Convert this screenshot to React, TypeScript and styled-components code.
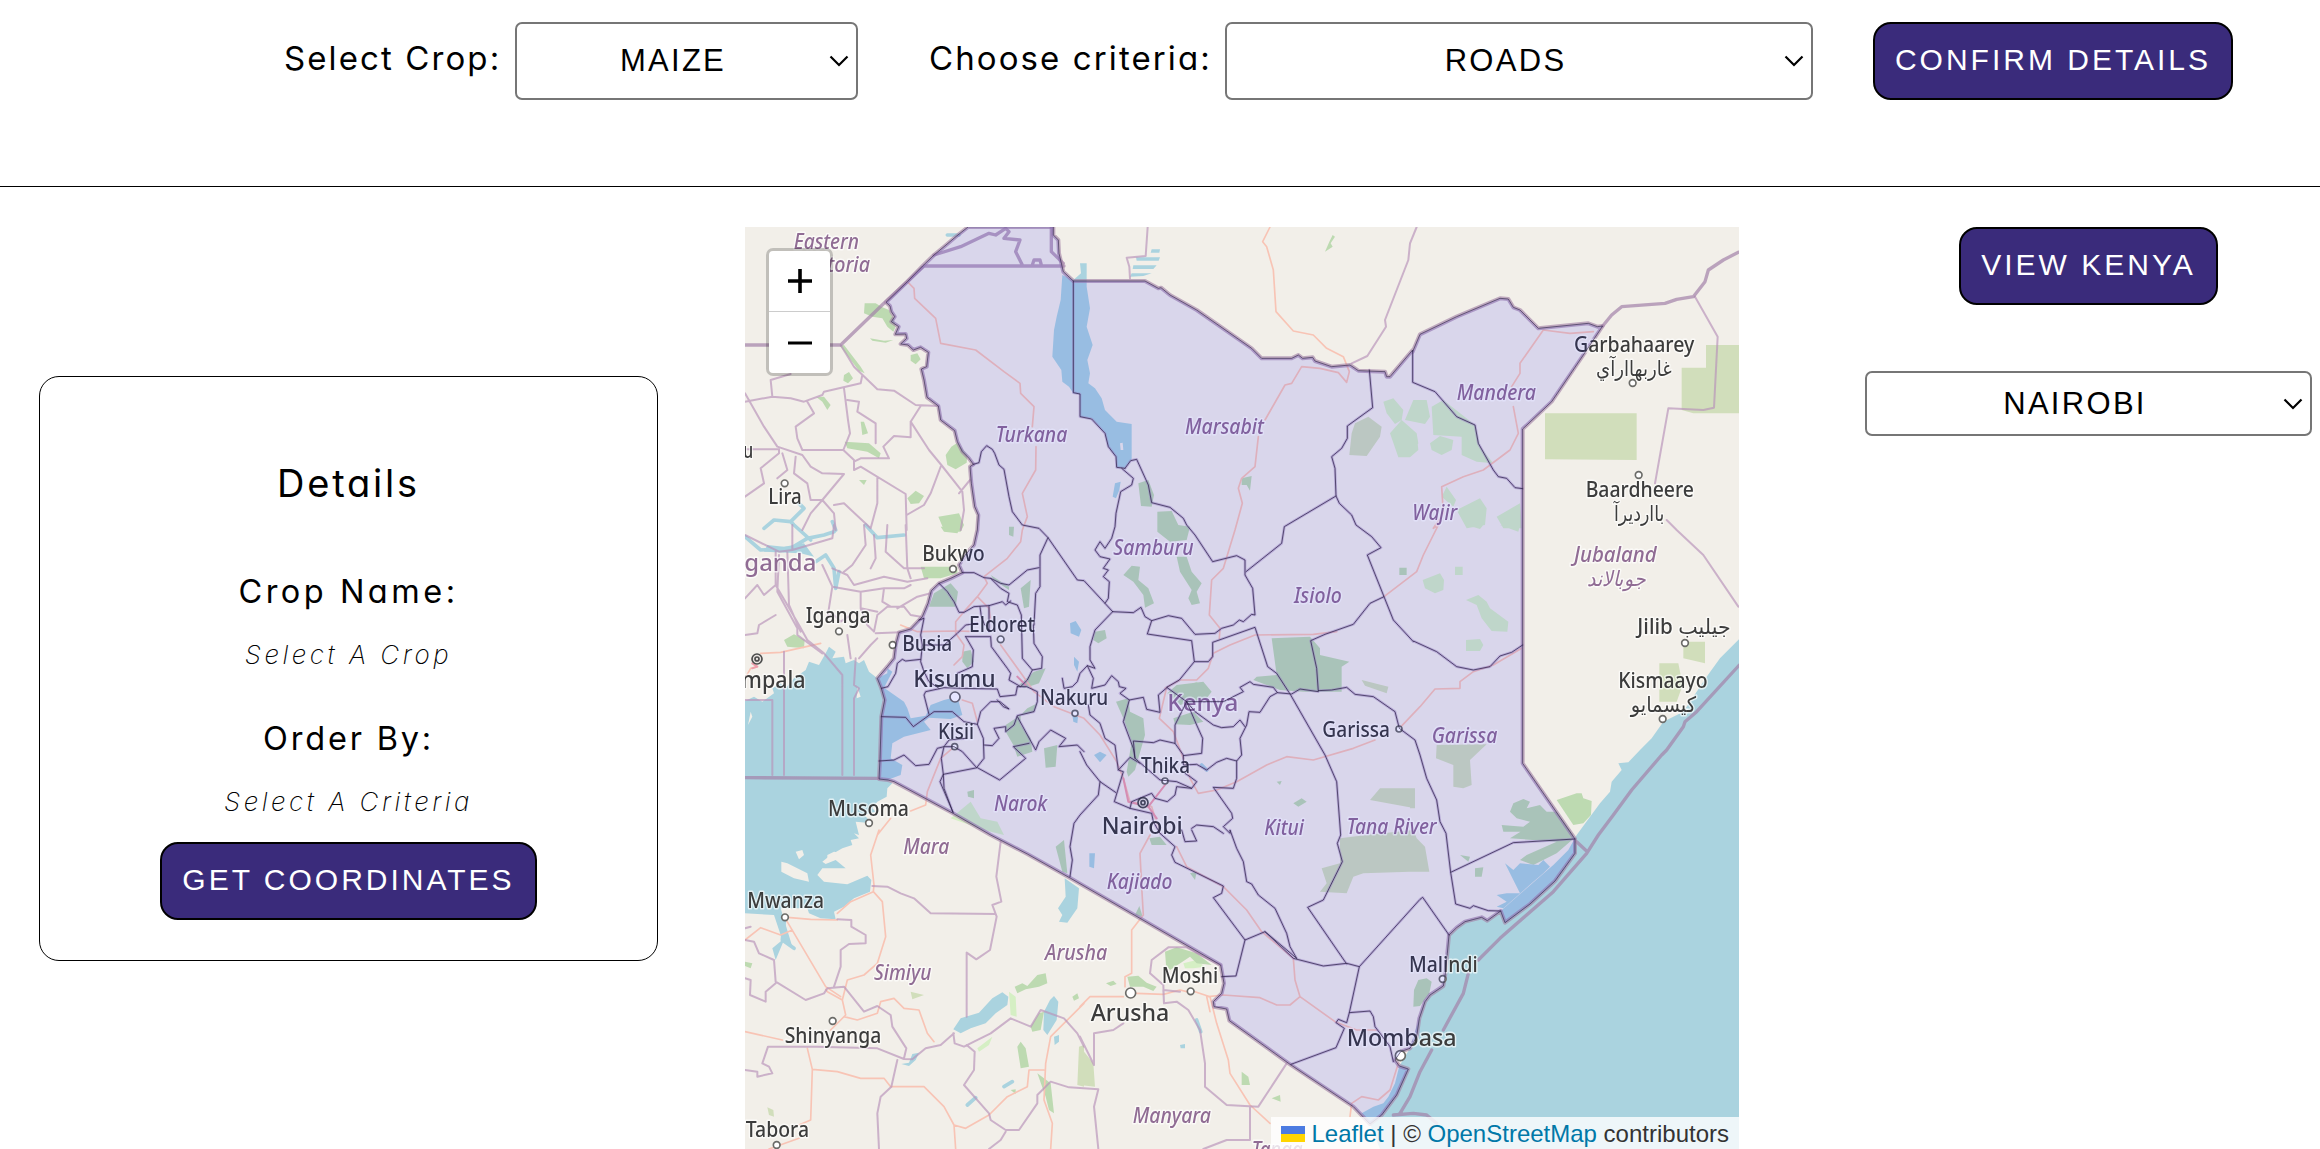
import React from "react";
import styled, { createGlobalStyle } from "styled-components";

const GlobalStyle = createGlobalStyle`
  *, *::before, *::after { box-sizing: border-box; }
  html, body { margin: 0; height: 100%; overflow: hidden; background: #fff; }
  body { color: #000; font-family: Inter, "Open Sans", sans-serif; font-feature-settings: "cv11" 1; }
`;

const Page = styled.div`
  display: flex;
  flex-direction: column;
  height: 1149px;
  overflow: hidden;
`;

const Toolbar = styled.header`
  display: flex;
  align-items: flex-start;
  height: 187px;
  padding: 22px 87px 0 284px;
  border-bottom: 1px solid #000;
`;

const Field = styled.label<{ $width: number; $after: number }>`
  display: flex;
  justify-content: space-between;
  width: ${(p) => p.$width}px;
  margin-right: ${(p) => p.$after}px;
`;

const FieldLabel = styled.span`
  font-size: 33px;
  line-height: 72px;
  letter-spacing: 2.1px;
  white-space: nowrap;
`;

const SelectBox = styled.span<{ $width: number; $height: number }>`
  display: grid;
  grid-template-columns: 1fr 27px;
  align-items: center;
  width: ${(p) => p.$width}px;
  height: ${(p) => p.$height}px;
  border: 2px solid #767676;
  border-radius: 7px;
  background: #fff;
  color: #000;
`;

const SelectValue = styled.span`
  text-align: center;
  font: 31px/36px "Liberation Sans", Arial, sans-serif;
  letter-spacing: 2.3px;
`;

const Button = styled.button<{ $width: number }>`
  flex: none;
  width: ${(p) => p.$width}px;
  height: 78px;
  padding: 0 0 2px;
  border: 2px solid #000;
  border-radius: 18px;
  background: #3a2b7b;
  color: #fff;
  font: 30px/36px "Liberation Sans", Arial, sans-serif;
  letter-spacing: 3px;
  white-space: nowrap;
`;

const Main = styled.main`
  display: grid;
  grid-template-columns: 745px 994px 581px;
  height: 962px;
  padding-top: 40px;
`;

const Card = styled.section`
  display: flex;
  flex-direction: column;
  align-items: center;
  width: 619px;
  height: 585px;
  margin: 149px 0 0 39px;
  padding-top: 81px;
  border: 1px solid #000;
  border-radius: 20px;
`;

const CardTitle = styled.h2`
  margin: 0 0 62px;
  font-size: 38px;
  line-height: 50px;
  font-weight: 400;
  letter-spacing: 2.8px;
`;

const Term = styled.h3<{ $spacing: number }>`
  margin: 0 0 23px;
  font-size: 32.5px;
  line-height: 44px;
  font-weight: 400;
  letter-spacing: ${(p) => p.$spacing}px;
`;

const Value = styled.p<{ $after: number }>`
  margin: 0 0 ${(p) => p.$after}px;
  font-size: 26px;
  line-height: 36px;
  font-weight: 250;
  font-style: italic;
  letter-spacing: 3.5px;
`;

const Side = styled.aside`
  display: flex;
  flex-direction: column;
  align-items: center;
  gap: 66px;
  padding: 0 8px 0 126px;
`;

const MapFrame = styled.div`
  position: relative;
  width: 994px;
  height: 922px;
  overflow: hidden;
  background: #f2efe9;
`;

const MapDrawing = styled.svg`
  display: block;
  width: 994px;
  height: 922px;
  font-family: "Noto Sans", "DejaVu Sans", sans-serif;
`;

const TileLayer = styled.g`
  filter: blur(1.5px);
`;

const ZoomControl = styled.div`
  position: absolute;
  left: 21px;
  top: 21px;
  display: flex;
  flex-direction: column;
  width: 67px;
  border: 3.5px solid rgba(0, 0, 0, 0.2);
  border-radius: 7px;
  background: #fff;
  background-clip: padding-box;
`;

const ZoomButton = styled.button`
  display: grid;
  place-items: center;
  height: 61px;
  padding: 0;
  border: 0;
  background: none;
  &:first-child { border-bottom: 1.5px solid #ccc; }
`;

const Attribution = styled.div`
  position: absolute;
  right: 0;
  bottom: 0;
  display: flex;
  align-items: center;
  height: 32px;
  padding: 2px 10px 0;
  background: rgba(255, 255, 255, 0.8);
  color: #333;
  font: 24px/30px "Liberation Sans", Arial, sans-serif;
  white-space: pre;
  a { color: #0078a8; }
  svg { margin-right: 7px; }
`;

/* Survey sheets: the map is digitised on nine sheets at three units per pixel. */
const SHEETS: Record<string, [number, number]> = {
  NW: [0, 0], N: [1008, 0], NE: [1998, 0],
  W: [0, 915], C: [1008, 915], E: [1998, 915],
  SW: [0, 1830], S: [1008, 1830], SE: [1998, 1830],
};

/* Turns "NW 10 20 30 40 | W 5 6 7 8" into path data in map units. */
function trace(source: string, close = false): string {
  let [dx, dy] = SHEETS.NW;
  let out = "";
  let start = true;
  let x: number | null = null;
  for (const token of source.trim().split(/\s+/)) {
    if (SHEETS[token]) {
      [dx, dy] = SHEETS[token];
    } else if (token === "|") {
      if (close) out += "Z";
      start = true;
    } else if (x === null) {
      x = Number(token) + dx;
    } else {
      out += `${start ? "M" : "L"}${x} ${Number(token) + dy}`;
      start = false;
      x = null;
    }
  }
  return close ? out + "Z" : out;
}

const KENYA = `NW 672 21 638 48 600 80 570 105 536 138 490 185 426 247 438 258 442 275 452 290 442 305 464 320 454 343
 485 342 488 355 470 372 492 375 508 390 530 382 553 397 548 440 532 447 540 480 549 532 583 558 590 600 632 632
 640 665 655 695 675 715 688 733 678 740 682 790 692 860 703 885 700 930
 W 690 60 665 88 645 120 655 143 620 160 585 175 562 197 552 235 535 275 500 312 465 322 455 360 450 400 430 425 400 460
 412 490 422 525 412 575 408 700 405 762 432 765 450 770 627 865 740 930
 SW 850 72 980 145 1020 168 S 180 265 422 405 432 460 425 490 400 515 402 530 440 537 448 572 630 703 820 830 870 882
 905 855 950 795 985 717 958 708 945 690 962 665 990 655 1010 620
 SE 28 565 45 515 60 495 100 468 105 440 112 370 117 315 140 293 165 275 215 262 232 272 272 243 285 278 360 222 435 153
 495 70 495 27 E 338 715 338 0 NE 338 627 425 545 520 405 578 318 562 320 535 310 385 325 330 270 310 262 295 237 270 235
 140 290 30 343 8 395 N 998 390 930 470 920 470 915 455 835 452 810 435 755 440 705 423 698 412 668 415 655 405 635 415
 545 415 515 385 350 270 270 225 243 203 235 205 195 183 0 183 NW 988 183 958 155 945 100 943 60 928 45 928 21`;

const COUNTIES = `NW 688 733 705 728 712 695 728 677 745 688 752 700 765 735 780 748 795 830 805 875 835 915
 W 885 10 912 38 1000 165 C 12 167 75 235 98 260
 | W 912 38 888 90 888 125 888 185 875 205 870 300
 | W 655 143 690 143 720 158 740 160 770 175 795 180 850 135 885 128
 | W 740 160 770 190 795 205 790 230 820 240 832 270 835 400 865 435 893 430 895 395 870 355 868 300
 | W 585 175 610 200 630 230 645 262 660 262 690 245 735 242 775 230 785 240 800 228
 | W 735 242 735 320 | W 708 245 712 275 722 300
 | W 525 285 540 280 530 330 535 360 530 410 540 440 555 470 585 490
 | W 412 490 432 485 455 445 460 415 475 403 485 408 530 403
 | W 540 360 600 360 640 325 665 300 700 295
 | W 665 335 740 335 742 365 790 430 800 445 795 465 830 485 850 465 865 435
 | W 665 335 688 375 685 425 640 445
 | W 555 568 540 510 545 500 600 488 650 490 760 492 768 515 815 510 820 485
 | W 412 575 485 577 508 605 570 560 625 560 660 590 700 598 710 560 740 530 768 530 795 552 778 545 760 525
 | W 405 708 450 705 480 690 515 722 555 718 580 670 600 665 615 645 665 640
 | W 700 598 718 640 720 700 698 728 655 680 630 665 600 665 592 700 598 748 700 728 767 765 845 700 808 665 855 655
 | W 598 748 588 770 627 862 | W 598 748 600 790 627 862
 | W 720 660 745 662 765 640 750 610 785 605 785 620 810 600 820 572 870 560 880 530 880 500 848 485 820 485
 | W 820 575 875 675 885 650 920 615 965 640 945 665 1000 660 1020 680
 | W 955 460 960 490 985 485 1000 470 C 0 445 22 422 40 460 35 490 75 480 95 452 115 470 118 485 138 490 120 505 148 525 190 517 200 553 240 562 235 510 262 487
 | C 22 422 45 430 30 405 30 365 45 315 98 260
 | C 98 260 160 263 183 247 195 275 215 287 265 272 305 280 345 328 405 325 425 310 460 300 478 285 490 290 515 268 525 270 518 190 495 150 495 105 470 92 398 110
 345 30 320 0 N 310 895 270 862 215 848 205 795 170 718 152 722 135 745
 | C 215 287 202 327 335 347 343 410 385 410 398 395 398 352 525 307 563 425 590 445 632 510 735 690 770 770 782 930
 S 772 40 787 95 730 210 683 232 800 402
 | C 343 410 298 465 260 487 320 530 430 530 490 500 480 487 510 470 520 478 580 487 592 503 635 507 660 492 715 500 710 430 692 347 735 328 820 298 870 235 912 215
 862 90 903 68 875 35 828 0 N 815 885 778 850 768 828 765 745 755 710 785 685 802 655 802 618 878 563 868 450
 | N 768 828 613 920 C 605 55 498 140
 | C 912 215 940 285 1000 350 E 10 348 80 380 140 425 190 435 240 425 270 393 305 382 338 360
 | C 715 497 755 495 800 487 825 508 880 515 945 560 958 610 1005 645 1020 690 E 50 760 80 825 90 890
 SE 108 10 122 127 137 222 180 235 190 227 235 242 272 243
 | SE 122 127 310 38 495 27
 | NE 8 395 8 487 75 515 140 590 195 615 205 670 250 750 265 770 290 775 315 803 338 806
 | C 592 503 570 515 540 562 507 560 500 600 480 640 485 690 470 708 440 700 410 712 380 735 350 718 310 720 310 690 285 655 240 645 220 653 160 648 165 700
 | C 320 530 305 560 285 600 285 655 | C 320 530 350 600 368 640 365 685 310 692
 | C 320 530 345 560 400 600 425 608 460 605 480 585 495 605
 | C 470 708 470 760 460 790 400 787 455 865 458 880 430 905 450 925 S 450 0 470 55 490 95 500 155 515 162 535 195 585 235 620 310 630 350 650 385
 | C 25 540 30 570 60 595 75 640 105 660 115 735 130 740 103 830 150 850 155 830 215 805 225 820 262 830 285 810 290 785 335 790 350 770 330 755 315 745
 | C 150 850 215 865 220 890 240 925
 | C 148 525 130 590 160 670 165 700 240 765 290 770 335 790 | C 115 735 150 697 180 715
 | C 0 680 20 720 60 770 108 803 | C 60 770 55 810 0 870 SW 990 -20 978 50 985 90 978 140
 | S 240 10 285 50 275 75 285 97 430 168 425 190 400 203 495 330 555 305 640 385 730 408 800 400 838 410 S 1020 208 SE 38 202 117 315
 | S 555 305 650 385 | S 838 410 808 548 800 578 775 568 768 578 793 595 768 653 633 703
 | S 808 548 870 543 880 560 885 590 930 650 940 695 | S 495 330 468 438 425 440
 | S 305 0 315 35 350 33 335 0 | C 335 910 350 900 400 905 430 925
 | NW 988 183 988 518 1008 522 1008 590 N 35 597 75 640 85 680 108 710 110 742 135 745
 | N 125 745 160 775 155 795 122 815 108 880 105 920 C 95 40 75 70 60 50 45 75 60 95 90 102 70 130 85 135 70 155 88 170 85 220 75 235`;

const LAND_PARKS = `NW 362 250 395 250 415 262 435 270 448 295 455 320 448 335 430 320 415 295 385 290 360 280
 | NW 288 378 300 375 350 440 362 460 345 452 | NW 500 405 520 400 530 418 515 433 500 422 | NW 300 465 315 456 327 475 312 490 298 482
 | NW 605 705 622 680 640 668 670 705 668 728 635 748 610 735 | NW 490 835 515 812 540 828 525 850 500 852
 | NW 583 890 645 880 660 915 W 650 20 600 15 | NW 302 665 375 670 410 700 405 715 370 695 310 685
 | NW 218 532 240 530 260 555 250 570 235 545 | NW 350 605 360 605 372 640 355 645 | NW 345 780 368 780 360 795
 | NW 378 355 385 362 425 368 448 360 420 362 | N 758 45 765 50 752 70 758 80 735 95 748 65
 | W 530 125 640 125 640 145 590 160 540 160 | W 555 245 570 205 620 175 642 200 635 245
 | W 120 345 150 328 182 345 180 370 130 365 | W 655 380 680 375 690 410 670 430 655 410
 | W 870 440 905 430 885 475 840 490 825 480 | W 785 600 830 570 830 600 860 640 865 680 820 695 808 660 785 620
 | W 900 670 940 660 935 725 905 728 | W 740 150 795 185 795 195 750 165 | W 830 190 860 165 855 245 840 250
 | W 850 550 880 535 870 560 830 570 | W 670 800 690 795 690 820 672 815 | W 795 5 810 5 808 35 795 30
 | N 175 790 205 780 222 825 215 860 183 858 | N 232 875 275 873 295 915 330 920 C 320 45 270 50 232 20
 | C 290 95 320 95 335 140 365 175 350 200 360 235 335 240 325 220 335 195 300 140 | C 130 150 155 122 180 125 175 165 205 190 222 235 195 248 190 210 160 170
 | N 485 775 515 768 510 812 500 795 485 795 | C 45 320 75 315 80 340 55 355 40 345
 | C 575 340 690 335 720 370 720 390 808 410 785 425 785 500 670 500 600 495 520 465 530 455 590 450
 | C 108 530 145 520 150 560 190 580 195 630 165 735 145 755 140 740 155 650 130 580
 | C 262 505 290 480 370 470 395 500 380 520 300 540 | C 280 580 340 560 370 590 330 600 285 598
 | C 640 835 665 820 680 830 655 845 | C 590 770 605 768 600 780 | C 958 128 980 128 980 150 958 150
 | S 208 25 240 20 260 45 215 45 | S 255 365 290 352 350 370 395 405 350 400 330 380 270 420 258 405
 | S 142 440 175 437 200 458 230 470 220 483 190 470 150 470 | S 78 460 100 452 110 462 92 468
 | S 485 725 505 740 510 765 485 765 | S 575 805 600 795 602 815 | S 165 255 178 228 188 260 | S 330 130 350 125 345 150
 | SE 10 530 12 480 25 450 50 445 65 455 58 490 30 528 | E 440 825 500 805 515 805 520 820 545 828 543 870 520 895 490 900
 | E 310 835 340 822 360 830 350 850 390 840 410 860 440 860 490 930 440 930 400 920 280 920 275 900 340 905 360 890 320 880 300 860
 | SE 300 25 340 0 480 0 492 25 440 70 370 105 330 90 350 75 440 35 | SE 150 75 180 80 175 95 | SE 195 115 220 112 215 140 195 140
 | SW 3 395 25 400 20 415 3 408 | SW 812 470 835 460 850 468 880 435 905 430 910 460 885 470 845 478 820 490
 | SW 860 590 885 550 900 545 890 600 865 605 | SW 820 650 830 635 845 655 855 710 830 715 | SW 985 500 1000 490 1005 505 990 512
 | SW 880 730 920 760 930 850 915 840 905 800 | SW 935 50 960 30 970 130 955 125 | SW 800 780 815 778 815 792
 | W 590 5 655 0 640 25 600 20`;

const RESERVES = `NE 405 580 680 580 680 720 405 718 | NE 815 443 888 443 888 375 987 375 987 580 850 580 815 570
 | E 820 350 885 350 885 415 820 400 | E 748 415 805 415 818 480 800 530 748 530
 | N 825 610 865 590 905 620 900 650 860 708 808 705 815 640 | C 900 790 1005 790 1005 850 870 825
 | S 780 25 860 15 1000 0 SE 20 25 45 50 58 125 0 125 S 850 130 820 140 800 190 720 185 740 160 725 115 780 100
 | E 80 660 230 658 180 705 185 780 160 790 130 785 130 720 78 700 | E 0 795 15 800 15 850 0 850
 | C 845 465 925 485 920 505 855 482 | SW 500 485 540 495 505 508 | SW 1005 650 1020 645 1020 770 1000 765
 | S 0 650 40 700 45 770 0 765 | SW 70 832 88 840 90 860 75 855`;

const PALE_PARKS = `N 910 545 940 535 970 570 965 600 945 612 920 580 | N 975 600 1000 540 NE 50 540 60 590 45 612
 | N 965 600 1010 640 1015 690 990 712 955 712 930 640 | NE -5 620 20 640 25 670 0 710
 | NE 65 560 100 540 195 615 210 680 250 730 200 725 155 705 155 650 70 645 | NE 60 670 90 648 130 660 125 690 95 705 65 690
 | NE 140 870 210 835 230 865 225 915 170 925 | NE 260 890 330 850 336 925 280 925 | NE 110 800 138 840 130 860 95 830
 | E 38 165 90 145 102 165 100 195 75 205 45 190 | E 135 125 158 125 158 150 135 150
 | E 168 225 205 210 230 230 240 250 295 290 292 320 245 318 215 280 200 240 | E 168 345 210 342 220 360 210 378 168 378
 | E 170 0 220 0 210 12 | E 270 0 330 0 325 20 | C 310 490 350 470 372 495 355 515 320 510
 | W 620 880 680 830 710 880 760 890 780 930 720 915 | SW 795 485 815 500 818 560 800 555 | SW 700 655 745 620 735 645 705 665
 | S 310 400 350 390 375 410 340 415 315 415`;

const LAKES = `NW 955 165 950 240 938 290 930 330 925 410 952 450 955 485 975 500 988 520 1008 522 1008 590 N 35 595 75 640 85 680
 108 710 110 742 135 745 155 718 155 612 110 605 75 570 65 535 45 505 25 490 30 460 22 420 38 375 20 320 30 265 20 200
 20 130 0 130 3 160 NW 988 180
 | W 3 528 30 515 55 530 90 505 85 490 110 475 125 490 150 460 185 435 195 410 225 420 245 385 255 365 275 380 265 400 300 395 305 415 330 405 345 415
 360 405 375 440 400 460 430 445 430 430 445 440 420 488 480 530 490 550 500 580 545 572 560 540 600 525 640 515 655 570 620 582 555 578 540 590 560 615 480 635
 445 655 440 700 475 720 470 750 430 765 445 775 430 790 428 815 400 830 385 850 395 860 360 870 385 895 335 890 345 930
 SW 330 10 345 25 320 30 325 45 295 55 260 75 235 95 245 102 275 90 305 115 235 115 220 135 240 155 310 163 370 137 382 150 378 185 330 205
 300 230 270 245 275 268 230 265 195 250 190 235 110 235 145 350 120 330 95 390 85 355 115 330 105 300 90 255 3 250
 | SW 628 598 650 565 705 548 745 505 775 487 793 500 790 525 755 550 725 580 680 595 650 610
 | SW 900 545 918 510 930 498 943 515 938 570 910 615 898 600 | SW 962 145 1005 175 1000 235 970 278 945 275 955 255 942 235 965 200
 | SW 930 620 945 615 945 635 932 645 | SW 505 672 525 668 515 690 495 708 472 702 495 698
 | W 978 295 995 288 1012 315 1005 335 980 325 | W 990 395 1005 410 1000 440 990 420 | C 42 690 60 680 80 690 60 712
 | N 105 790 122 785 118 810 108 835 98 830 | W 985 570 1002 575 1000 595 988 590
 | N 215 88 240 88 238 98 212 98 | N 168 112 240 112 236 122 170 122 | N 160 136 230 136 220 147 158 147 | N 155 160 215 160 190 168 150 170
 | S 28 70 45 70 42 115 28 110 | S 300 645 315 642 315 655 302 655
 | W 70 60 120 65 180 55 210 95 170 85 60 80`;

const ISLANDS = `SW 112 95 130 100 190 130 195 155 150 145 112 125 | SW 155 65 175 60 180 75 165 88 | SW 250 75 270 65 300 70 275 80 250 95
 | W 340 485 350 515 338 520 | W 20 560 25 575 12 600 | N 120 670 128 668 130 690 122 690`;

const OCEAN = `E 990 340 930 400 890 455 860 500 820 560 760 590 725 640 690 675 655 712 625 715 635 735 605 770 600 800 570 835 500 930
 SE 475 60 430 105 350 175 272 243 232 272 215 262 165 275 117 315 112 370 105 440 100 468 60 495 45 515 28 565 10 620 0 655
 S 958 708 945 760 925 800 910 820 880 830 845 850 870 882 900 957 SE 1000 957
 | SE 285 100 310 120 330 100 385 105 400 90 420 110 400 130 370 155 280 235 260 230 290 215 260 195 290 190 330 190 310 150`;

const FRONTIERS = `NW 3 375 290 375 430 240 540 138 960 138 | NW 570 105 650 80 735 40 755 45 785 25 795 35 780 55 828 60 815 95 835 135
 | NW 865 135 870 120 888 120 892 135 | NW 922 21 922 95 958 130 | NE 578 318 605 285 635 260 765 250 800 238 850 230 885 185 895 150 940 120 985 97
 | E 988 420 860 560 825 590 820 605 770 675 755 690 665 795 610 870 565 930 SE 530 70 430 185 270 325 205 390
 | SE 175 430 160 490 100 600 | SE 65 660 30 725 0 800 S 960 850 | SE 500 35 532 65 | S 940 855 1000 850 SE 50 855 80 880
 | W 3 758 405 760`;

const PROVINCES = `NE 855 230 923 350 912 563 880 570 775 565 735 790 | NE 770 900 800 930 E 880 90 985 245
 | N 1010 21 990 70 985 120 915 300 918 320 862 408 815 430 | N 203 21 197 108 140 113 148 140 150 175
 | NW 290 375 330 440 400 508 450 512 515 555 583 558 | NW 530 558 500 605 500 652 450 648 418 680 435 715 350 715 330 725
 | NW 500 605 555 690 592 735 655 815 660 870 650 930 | NW 592 735 560 820 540 855 488 885 | NW 330 750 350 740 485 822 488 930
 | NW 3 545 85 530 140 535 180 545 235 525 240 515 305 500 350 490 355 465 | NW 85 530 80 480 140 462 | NW 300 505 312 600 318 640 298 690 330 720 330 750
 | NW 3 520 60 620 100 680 175 705 200 740 235 760 300 762 235 840 200 880 175 930 | NW 190 545 210 580 155 620 160 655 175 690 298 690
 | NW 310 540 345 545 340 575 395 610 395 670 | NW 3 688 105 688 105 700 50 745 60 790 3 830 | NW 115 700 130 750 100 775 | NW 155 710 150 760 190 790 200 840 235 840
 | NW 235 840 270 880 275 930 | NW 270 855 300 850 380 925 400 850 400 775 | NW 678 780 645 820
 | W 145 0 145 75 105 80 3 30 | W 95 80 95 180 165 300 190 345 240 385 295 450 295 750 | W 105 90 100 200 160 310 160 330 235 385
 | W 130 80 135 240 170 320 | W 145 75 265 40 270 0 | W 265 130 310 150 330 180 420 155 490 170 550 160 | W 360 0 365 60 325 120 300 140
 | W 390 30 395 100 380 130 | W 430 0 425 80 480 130 540 130 | W 485 0 490 130 500 160 | W 235 120 265 185 250 280 265 265 290 290 320 270
 | W 265 185 350 200 350 250 370 300 390 320 | W 350 200 420 190 480 190 500 180 | W 390 320 400 270 430 245 480 245 500 270 530 275
 | W 420 190 415 230 440 245 | W 460 250 520 215 560 205 | W 395 325 470 322 | W 400 260 350 250 | W 3 220 40 180 60 210 95 180
 | W 120 380 120 750 | W 3 525 85 525 85 750 | W 335 400 330 480 345 490 330 520 330 750 | W 3 330 40 325 45 300 95 270 | W 310 330 320 400
 | W 345 400 380 360 400 340
 | SW 3 330 30 335 45 370 90 390 95 455 185 510 240 490 250 475 300 470 360 545 400 528 440 555 445 590 487 655 480 685
 | SW 270 470 290 410 290 360 315 342 365 340 365 315 322 290 322 270 280 268
 | SW 3 445 20 450 18 495 65 515 65 485 95 460
 | SW 385 168 430 170 470 190 510 205 560 250 755 252 | SW 770 35 757 140 772 215 745 225 758 260 738 360 697 388 668 368 668 560
 | SW 3 720 40 725 40 740 85 730 75 710 55 700 72 650 220 650 400 655 480 687 505 688 545 655 590 645 630 610
 | SW 460 690 442 770 410 800 400 850 405 957 | SW 628 610 632 640 660 650 690 635 740 610 800 565 860 590 890 540 960 565 1000 610 1020 650
 | SW 668 645 692 665 690 720 660 765 735 850 740 870 785 900 825 900 880 820 880 795 920 755 975 772 S 55 778 42 830 55 957
 | SW 785 905 770 930 735 957 | S 422 405 370 380 320 352 265 352 215 390 210 430 250 465 252 520 290 515 325 540 360 600 375 700 375 770 440 825 535 830 620 700
 | S 510 830 510 930 440 930 370 957 | S 0 620 42 705 42 610 100 600 130 580 | S 252 520 250 480 300 485 | SW 3 295 20 290`;

const ROADS = `N 570 21 548 65 560 80 580 150 588 275 640 333 700 345 740 385 790 410 808 455 800 487 775 458 720 445 665 440 635 490 615 495 555 600
 | N 535 650 525 740 485 775 475 805 487 850 465 930 C 430 130 395 165 388 270 420 310 418 340
 | NW 490 185 510 205 512 235 575 295 590 370 695 390 780 455 828 490 830 520 870 560 865 620 | NW 876 680 875 750 835 820 850 890 835 930
 W 830 50 790 100 720 155 730 175 700 215 735 250 740 290
 | W 470 300 520 320 640 318 700 320 | W 700 215 660 260 635 290 635 325 660 360 655 395 630 420
 | W 770 360 835 450 870 500 930 545 1020 580 C 60 630 110 710 130 760 150 830 215 845 240 925
 | C 260 487 238 580 280 620 310 700 330 760 355 805 410 795 470 770 560 720 620 695 700 705 820 670 885 645 | C 255 490 300 465 350 465 385 430 400 385 450 360 525 330 700 328 770 320
 | C 912 215 1010 140 E 40 90 85 0 NE 70 925 100 880 95 800 160 770 220 750 300 690 325 640 310 560 | NE 305 500 330 460 330 430 400 330 480 340 550 335
 | C 958 610 1020 545 E 75 492 150 490 150 470 190 440 250 420 335 370
 | W 50 385 110 382 230 355 | W 3 460 20 430 40 425 | W 655 525 685 535 700 590
 | W 625 670 590 700 550 800 545 840 500 858 | W 440 880 400 930 SW 405 0 380 75 390 165 388 185 415 215 425 320 400 400 360 435 310 450 295 510 305 555 260 600
 | SW 388 185 320 215 280 250 | SW 122 262 245 470 290 500 | SW 130 262 200 268 280 270 | SW 3 330 50 293 110 315 145 300
 | SW 3 605 115 630 | SW 245 478 250 485 295 510 | SW 300 560 340 570 400 550 410 515 450 505 480 535 525 540 550 610 570 635
 | SW 190 655 205 718 200 870 165 885 | SW 205 718 280 725 350 745 420 745 440 770 540 770 600 830 630 885 635 957
 | SW 630 885 665 895 735 855 790 800 850 770 855 720 900 720 | SW 1020 520 920 620 905 700 900 810 925 880 920 957 | SW 75 957 165 925
 | S 0 530 30 500 130 500 | S 170 490 250 493 300 480 320 485 | S 345 485 390 500 410 580 445 690 450 730 510 825 570 880
 | S 385 500 430 495 540 503 590 525 630 525 660 500 765 575 830 600 890 600 | S 640 385 645 450 660 500 | S 135 470 135 440 155 430 155 300 190 255 185 170 180 70 210 15
 | S 290 50 320 110 430 170 500 240 545 305 640 385 | S 955 700 930 780 895 810 845 800 815 820 810 860 | S 380 500 390 545`;

const TRUNK = `C 130 760 145 830 205 845 255 780 | C 205 845 230 880 | W 25 415 40 425 25 430 | W 820 455 845 480`;

const RIVERS = `NW 60 925 90 900 140 905 180 865 165 850 | W 3 35 50 75 140 70 190 40 240 30 270 20 | W 215 110 245 90 270 130 275 190 285 140
 | NW 140 905 150 915 W 200 45 | W 365 0 400 38 480 30 | NW 265 905 275 930 | NW 610 45 645 45 | S 350 570 362 605 | SW 670 825 695 803
 | SW 780 770 805 755 | C 365 720 380 735 | SW 122 262 115 330 150 355`;

type LabelKind = "city" | "capital" | "region" | "country";
type LabelSpec = [string, string, number, number, number, LabelKind];

/* text, sheet, left, right, baseline, kind */
const LABELS: LabelSpec[] = [
  ["Eastern", "NW", 149, 345, 88, "region"],
  ["Equatoria", "NW", 116, 378, 157, "region"],
  ["Turkana", "NW", 755, 970, 667, "region"],
  ["Marsabit", "N", 315, 552, 643, "region"],
  ["Mandera", "NE", 140, 378, 541, "region"],
  ["Wajir", "NE", 7, 142, 900, "region"],
  ["Samburu", "C", 100, 341, 90, "region"],
  ["Isiolo", "C", 642, 785, 233, "region"],
  ["Garissa", "E", 65, 262, 653, "region"],
  ["Narok", "W", 750, 910, 857, "region"],
  ["Kitui", "S", 553, 672, 16, "region"],
  ["Tana River", "S", 800, 1070, 13, "region"],
  ["Kajiado", "S", 80, 277, 178, "region"],
  ["Mara", "SW", 478, 616, 72, "region"],
  ["Simiyu", "SW", 390, 562, 450, "region"],
  ["Arusha", "SW", 903, 1090, 390, "region"],
  ["Manyara", "S", 158, 393, 880, "region"],
  ["Tanga", "S", 515, 668, 980, "region"],
  ["Jubaland", "E", 492, 740, 110, "region"],
  ["جوبالاند", "E", 530, 706, 183, "region"],
  ["Garbahaarey", "NE", 492, 853, 397, "city"],
  ["غاربهاارآي", "NE", 558, 785, 467, "city"],
  ["Baardheere", "NE", 527, 852, 832, "city"],
  ["بااردیرآ", "NE", 612, 763, 903, "city"],
  ["Jilib جيليب", "E", 682, 962, 328, "city"],
  ["Kismaayo", "E", 625, 893, 488, "city"],
  ["كيسمايو", "E", 662, 858, 560, "city"],
  ["Gulu", "NW", -82, 28, 715, "city"],
  ["Lira", "NW", 73, 173, 853, "city"],
  ["Bukwo", "W", 535, 722, 109, "city"],
  ["Iganga", "W", 185, 380, 293, "city"],
  ["Busia", "W", 475, 625, 378, "city"],
  ["Eldoret", "W", 675, 873, 320, "city"],
  ["Kisii", "W", 582, 690, 643, "city"],
  ["Nakuru", "W", 888, 1093, 540, "city"],
  ["Musoma", "W", 252, 495, 872, "city"],
  ["Mwanza", "SW", 10, 240, 235, "city"],
  ["Shinyanga", "SW", 122, 412, 640, "city"],
  ["Tabora", "SW", 5, 195, 920, "city"],
  ["Moshi", "S", 245, 415, 460, "city"],
  ["Malindi", "SE", -3, 203, 427, "city"],
  ["Thika", "C", 183, 330, 743, "city"],
  ["Garissa", "C", 727, 930, 635, "city"],
  ["Kampala", "W", -85, 185, 488, "capital"],
  ["Kisumu", "W", 508, 755, 485, "capital"],
  ["Nairobi", "C", 65, 308, 927, "capital"],
  ["Arusha", "S", 32, 268, 572, "capital"],
  ["Mombasa", "S", 800, 1130, 647, "capital"],
  ["Uganda", "W", -52, 217, 137, "country"],
  ["Kenya", "C", 262, 475, 558, "country"],
];

/* sheet, x, y, radius */
const TOWNS: [string, number, number, number][] = [
  ["NW", 122, 790, 10], ["W", 627, 132, 10], ["W", 285, 319, 10], ["W", 446, 360, 10], ["W", 770, 343, 10],
  ["W", 633, 516, 15], ["W", 632, 665, 9], ["W", 993, 565, 9], ["W", 375, 894, 10], ["SW", 123, 262, 10],
  ["SW", 266, 573, 10], ["SW", 98, 945, 10], ["S", 152, 489, 15], ["S", 332, 484, 10], ["S", 961, 677, 15],
  ["SE", 98, 447, 10], ["C", 255, 768, 9], ["C", 957, 612, 9], ["NE", 668, 489, 10], ["NE", 686, 765, 10],
  ["E", 825, 354, 10], ["E", 758, 582, 10],
];

const SIZE: Record<LabelKind, number> = { city: 64, capital: 72, region: 63, country: 70 };

function MapLabel({ spec }: { spec: LabelSpec }) {
  const [text, sheet, left, right, baseline, kind] = spec;
  const [dx, dy] = SHEETS[sheet];
  const purple = kind === "region" || kind === "country";
  return (
    <text
      x={dx + (left + right) / 2}
      y={dy + baseline}
      textAnchor="middle"
      textLength={right - left}
      lengthAdjust="spacingAndGlyphs"
      fontSize={SIZE[kind]}
      fontStyle={kind === "region" ? "italic" : "normal"}
      fontWeight={500}
      fill={purple ? "#906c94" : "#3c3c3c"}
      stroke="#fff"
      strokeOpacity={0.65}
      strokeWidth={9}
      paintOrder="stroke"
    >
      {text}
    </text>
  );
}

function Capital({ sheet, x, y }: { sheet: string; x: number; y: number }) {
  const [dx, dy] = SHEETS[sheet];
  return (
    <g fill="none" stroke="#4c4c4c" strokeWidth={5}>
      <circle cx={dx + x} cy={dy + y} r={15} fill="#e8e4e0" />
      <circle cx={dx + x} cy={dy + y} r={6} />
    </g>
  );
}

function KenyaMap() {
  return (
    <MapDrawing viewBox="3 21 2982 2766" fill="none" strokeLinejoin="round" strokeLinecap="round">
      <TileLayer>
        <path d="M-60 -40H3060V2850H-60Z" fill="#f2efe9" />
        <path d={trace(PALE_PARKS, true)} fill="#d5efc4" />
        <path d={trace(RESERVES, true)} fill="#d1debb" />
        <path d={trace(LAND_PARKS, true)} fill="#bddab1" />
        <path d={trace(OCEAN, true)} fill="#aad3df" />
        <path d={trace(LAKES, true)} fill="#aad3df" />
        <path d={trace(ISLANDS, true)} fill="#f2efe9" />
        <path d={trace(RIVERS)} stroke="#aad3df" strokeWidth={11} />
        <path d={trace(ROADS)} stroke="#f8c4b5" strokeWidth={5} />
        <path d={trace(TRUNK)} stroke="#ee9dab" strokeWidth={6} />
        <path d={trace(PROVINCES)} stroke="#b893b9" strokeOpacity={0.68} strokeWidth={6} />
        <path d={trace(FRONTIERS)} stroke="#a382a8" strokeOpacity={0.7} strokeWidth={10} />
        <path d={trace(COUNTIES)} stroke="#a98fc0" strokeOpacity={0.5} strokeWidth={8} />
        <path d={trace(KENYA, true)} stroke="#a382a8" strokeOpacity={0.65} strokeWidth={12} />
        {TOWNS.map(([sheet, x, y, r]) => (
          <circle
            key={`${sheet}${x}`}
            cx={SHEETS[sheet][0] + x}
            cy={SHEETS[sheet][1] + y}
            r={r}
            fill="#fff"
            stroke="#6b6b68"
            strokeWidth={5}
          />
        ))}
        <Capital sheet="C" x={189} y={833} />
        <Capital sheet="W" x={39} y={402} />
        {LABELS.map((spec) => (
          <MapLabel key={spec[0] + spec[1]} spec={spec} />
        ))}
      </TileLayer>
      <path d={trace(KENYA, true)} fill="#0000ff" fillOpacity={0.1} stroke="#2a2045" strokeOpacity={0.6} strokeWidth={3} />
      <path d={trace(COUNTIES)} stroke="#2a2045" strokeOpacity={0.72} strokeWidth={3} />
    </MapDrawing>
  );
}

function Select({ value, width, height = 78 }: { value: string; width: number; height?: number }) {
  return (
    <SelectBox $width={width} $height={height}>
      <SelectValue>{value}</SelectValue>
      <svg width="20" height="12" viewBox="0 0 20 12" fill="none">
        <path d="M1.5 1.5 10 10 18.5 1.5" stroke="#000" strokeWidth="2.2" />
      </svg>
    </SelectBox>
  );
}

export default function App() {
  return (
    <Page>
      <GlobalStyle />
      <Toolbar>
        <Field $width={574} $after={71}>
          <FieldLabel>Select Crop:</FieldLabel>
          <Select value="MAIZE" width={343} />
        </Field>
        <Field $width={884} $after={60}>
          <FieldLabel>Choose criteria:</FieldLabel>
          <Select value="ROADS" width={588} />
        </Field>
        <Button $width={360}>CONFIRM DETAILS</Button>
      </Toolbar>
      <Main>
        <Card>
          <CardTitle>Details</CardTitle>
          <Term $spacing={3.5}>Crop Name:</Term>
          <Value $after={44}>Select A Crop</Value>
          <Term $spacing={2.8}>Order By:</Term>
          <Value $after={22}>Select A Criteria</Value>
          <Button $width={377}>GET COORDINATES</Button>
        </Card>
        <MapFrame>
          <KenyaMap />
          <ZoomControl>
            <ZoomButton aria-label="Zoom in">
              <svg width="24" height="24" viewBox="0 0 24 24">
                <path d="M0 12H24M12 0V24" stroke="#000" strokeWidth="3.6" />
              </svg>
            </ZoomButton>
            <ZoomButton aria-label="Zoom out">
              <svg width="24" height="24" viewBox="0 0 24 24">
                <path d="M0 12H24" stroke="#000" strokeWidth="3" />
              </svg>
            </ZoomButton>
          </ZoomControl>
          <Attribution>
            <svg width="24" height="16" viewBox="0 0 12 8">
              <path fill="#4c7be1" d="M0 0h12v4H0z" />
              <path fill="#ffd500" d="M0 4h12v4H0z" />
            </svg>
            <a>Leaflet</a> | © <a>OpenStreetMap</a> contributors
          </Attribution>
        </MapFrame>
        <Side>
          <Button $width={259}>VIEW KENYA</Button>
          <Select value="NAIROBI" width={447} height={65} />
        </Side>
      </Main>
    </Page>
  );
}
